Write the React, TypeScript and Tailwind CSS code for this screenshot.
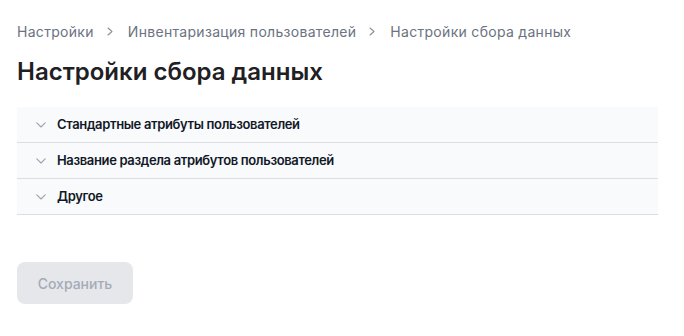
import React from "react";

function Chevron({ className }: { className?: string }) {
  return (
    <svg width="10" height="6" viewBox="0 0 10 6" fill="none" className={className}>
      <path d="M0.8 0.8L5 5L9.2 0.8" stroke="currentColor" strokeWidth="1.1" strokeLinecap="round" strokeLinejoin="round" />
    </svg>
  );
}

function Sep() {
  return (
    <svg width="6" height="9" viewBox="0 0 6 9" fill="none" className="text-[#8a909a]">
      <path d="M1 1L5 4.5L1 8" stroke="currentColor" strokeWidth="1.1" strokeLinecap="round" strokeLinejoin="round" />
    </svg>
  );
}

const sections = [
  "Стандартные атрибуты пользователей",
  "Название раздела атрибутов пользователей",
  "Другое",
];

export default function App() {
  return (
    <div
      className="w-[684px] h-[336px] bg-white pl-[17px] pr-[26px] pt-[21px]"
      style={{ fontFamily: "Inter, 'Noto Sans', sans-serif" }}
    >
      <nav className="flex items-center h-5 text-[14px] text-[#6b7280] tracking-[0.3px]">
        <span>Настройки</span>
        <span className="ml-[13px] mr-[15px] flex items-center"><Sep /></span>
        <span>Инвентаризация пользователей</span>
        <span className="ml-[13px] mr-[15px] flex items-center"><Sep /></span>
        <span>Настройки сбора данных</span>
      </nav>
      <h1 className="mt-[15px] text-[24px] leading-8 font-semibold text-[#1f2023]">
        Настройки сбора данных
      </h1>
      <div className="mt-[19px] flex flex-col">
        {sections.map((s) => (
          <div
            key={s}
            className="h-9 flex items-center bg-[#f9fafb] border-b border-[#dcdee2] pl-[19px]"
          >
            <Chevron className="text-[#9ca3af]" />
            <span className="ml-[11px] text-[13px] font-semibold text-[#111827] tracking-[-0.35px]">{s}</span>
          </div>
        ))}
      </div>
      <button
        disabled
        className="mt-[47px] w-[116px] h-[42px] rounded-lg bg-[#e5e7eb] text-[#a4abb6] text-[14px] font-medium"
      >
        Сохранить
      </button>
    </div>
  );
}
